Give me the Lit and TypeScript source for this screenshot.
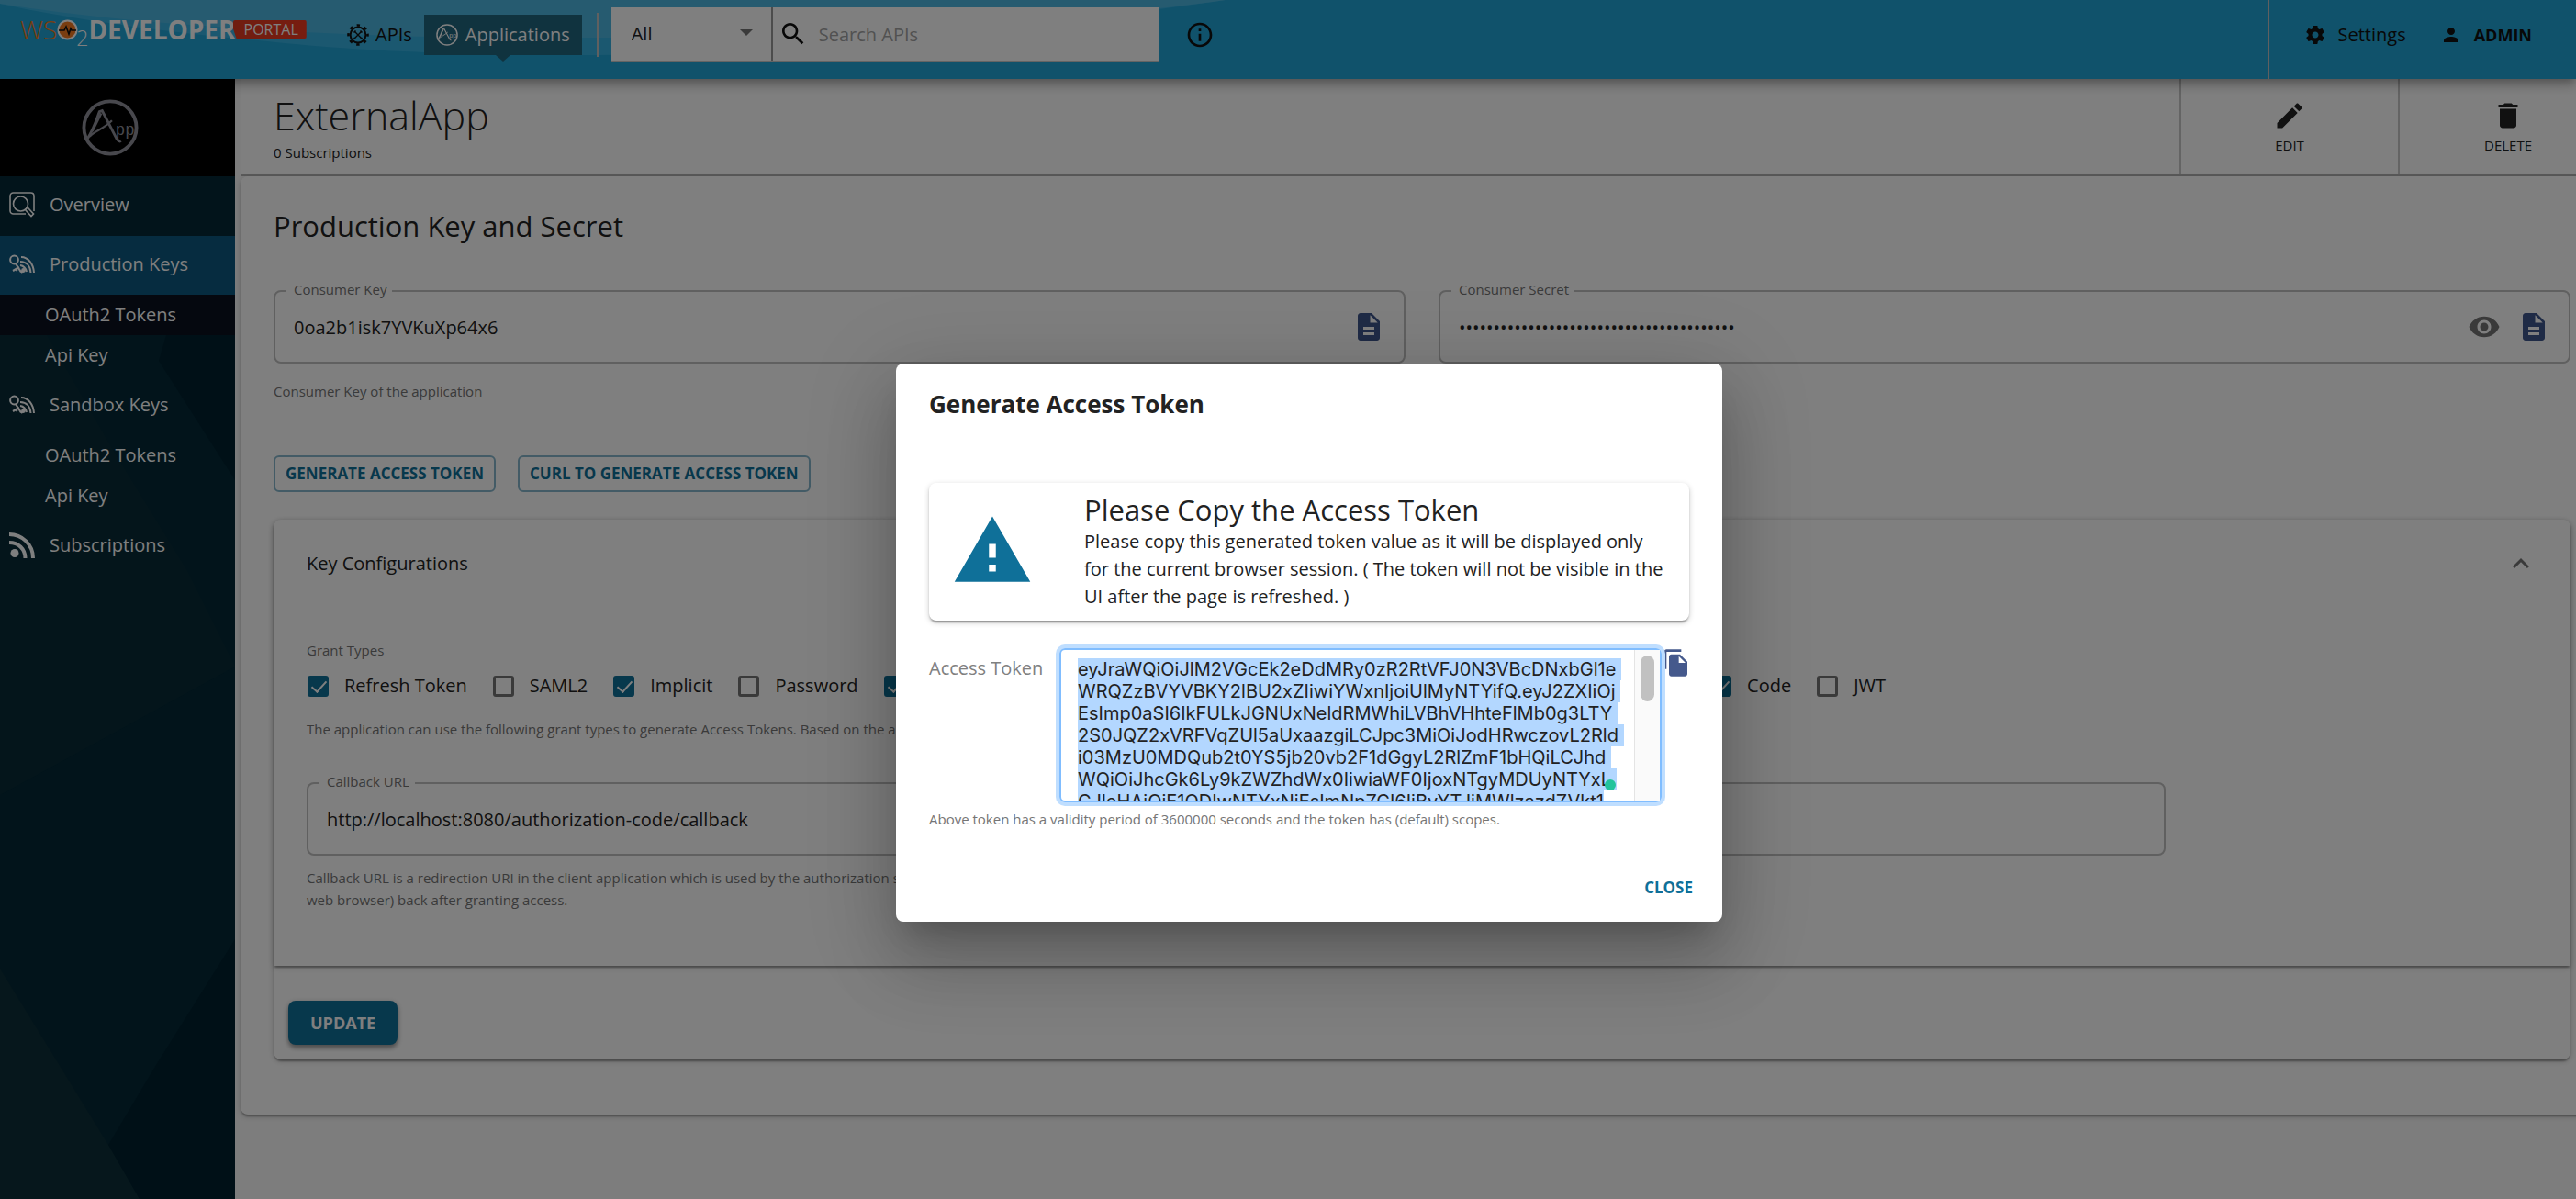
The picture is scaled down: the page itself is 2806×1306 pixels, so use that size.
import { LitElement, html, css } from "lit";
import { customElement, query } from "lit/decorators.js";

const PATHS = {
  search:
    "M15.5 14h-.79l-.28-.27C15.41 12.59 16 11.11 16 9.5 16 5.91 13.09 3 9.5 3S3 5.91 3 9.5 5.91 16 9.5 16c1.61 0 3.09-.59 4.23-1.57l.27.28v.79l5 4.99L20.49 19l-4.99-5zm-6 0C7.01 14 5 11.99 5 9.5S7.01 5 9.5 5 14 7.01 14 9.5 11.99 14 9.5 14z",
  info: "M11 17h2v-6h-2v6zm1-15C6.48 2 2 6.48 2 12s4.48 10 10 10 10-4.48 10-10S17.52 2 12 2zm0 18c-4.41 0-8-3.59-8-8s3.59-8 8-8 8 3.59 8 8-3.59 8-8 8zM11 9h2V7h-2v2z",
  settings:
    "M19.43 12.98c.04-.32.07-.64.07-.98s-.03-.66-.07-.98l2.11-1.65c.19-.15.24-.42.12-.64l-2-3.46c-.12-.22-.39-.3-.61-.22l-2.49 1c-.52-.4-1.08-.73-1.69-.98l-.38-2.65C14.46 2.18 14.25 2 14 2h-4c-.25 0-.46.18-.49.42l-.38 2.65c-.61.25-1.17.59-1.69.98l-2.49-1c-.23-.09-.49 0-.61.22l-2 3.46c-.13.22-.07.49.12.64l2.11 1.65c-.04.32-.07.65-.07.98s.03.66.07.98l-2.11 1.65c-.19.15-.24.42-.12.64l2 3.46c.12.22.39.3.61.22l2.49-1c.52.4 1.08.73 1.69.98l.38 2.65c.03.24.24.42.49.42h4c.25 0 .46-.18.49-.42l.38-2.65c.61-.25 1.17-.59 1.69-.98l2.49 1c.23.09.49 0 .61-.22l2-3.46c.12-.22.07-.49-.12-.64l-2.11-1.65zM12 15.5c-1.93 0-3.5-1.57-3.5-3.5s1.57-3.5 3.5-3.5 3.5 1.57 3.5 3.5-1.57 3.5-3.5 3.5z",
  person:
    "M12 12c2.21 0 4-1.79 4-4s-1.79-4-4-4-4 1.79-4 4 1.79 4 4 4zm0 2c-2.67 0-8 1.34-8 4v2h16v-2c0-2.66-5.33-4-8-4z",
  edit: "M3 17.25V21h3.75L17.81 9.94l-3.75-3.75L3 17.25zM20.71 7.04c.39-.39.39-1.02 0-1.41l-2.34-2.34c-.39-.39-1.02-.39-1.41 0l-1.83 1.83 3.75 3.75 1.83-1.83z",
  trash: "M6 19c0 1.1.9 2 2 2h8c1.1 0 2-.9 2-2V7H6v12zM19 4h-3.5l-1-1h-5l-1 1H5v2h14V4z",
  doc: "M14 2H6c-1.1 0-1.99.9-1.99 2L4 20c0 1.1.89 2 1.99 2H18c1.1 0 2-.9 2-2V8l-6-6zm2 16H8v-2h8v2zm0-4H8v-2h8v2zm-3-5V3.5L18.5 9H13z",
  eye: "M12 4.5C7 4.5 2.73 7.61 1 12c1.73 4.39 6 7.5 11 7.5s9.27-3.11 11-7.5c-1.73-4.39-6-7.5-11-7.5zM12 17c-2.76 0-5-2.24-5-5s2.24-5 5-5 5 2.24 5 5-2.24 5-5 5zm0-8c-1.66 0-3 1.34-3 3s1.34 3 3 3 3-1.34 3-3-1.34-3-3-3z",
  chevronUp: "M12 8l-6 6 1.41 1.41L12 10.83l4.59 4.58L18 14z",
  warning: "M1 21h22L12 2 1 21zm12-3h-2v-2h2v2zm0-4h-2v-4h2v4z",
  copy: "M16 1H4c-1.1 0-2 .9-2 2v14h2V3h12V1zm-1 4l6 6v10c0 1.1-.9 2-1.99 2H7.99C6.89 23 6 22.1 6 21V7c0-1.1.9-2 1.99-2H15zm-1 7h5.5L14 6.5V12z",
};

const icon = (name: keyof typeof PATHS, size: number) => html`
  <svg class="icon" width=${size} height=${size} viewBox="0 0 24 24" aria-hidden="true">
    <path d=${PATHS[name]} />
  </svg>
`;

/* Ringed application emblem, shared by the header tab and the sidebar. */
const appEmblem = (size: number) => html`
  <svg width=${size} height=${size} viewBox="0 0 64 64" fill="none" stroke="currentColor" aria-hidden="true">
    <circle cx="32" cy="32" r="29.5" stroke-width="4" />
    <path d="M5 47C11 38 16 26 20 14l3-1 16 31c2 3 4 4 5 3" stroke-width="3" />
    <path d="M9 42C14 36 24 34 34 24M22 16L12 36" stroke-width="2.4" />
    <text class="emblem-text" x="38" y="40" stroke="none" fill="currentColor">pp</text>
  </svg>
`;

const keysIcon = html`
  <svg width="28" height="24" viewBox="0 0 28 24" fill="none" stroke="currentColor" aria-hidden="true">
    <circle cx="5.5" cy="7" r="4.4" stroke-width="2" />
    <path d="M7 11l6 9.500M4 19l7-4M9 17.500l-2 1M13 21l2-2" stroke-width="2.200" />
    <path d="M12 9c7 0 11 5 11.500 12M13 4c8 0 13.500 8 14 17M12 13c3 .5 6 3 7 7" stroke-width="2" />
    <circle cx="15.500" cy="18.500" r="2.400" fill="currentColor" stroke="none" />
  </svg>
`;

const overviewIcon = html`
  <svg width="28" height="28" viewBox="0 0 28 28" fill="none" stroke="currentColor" stroke-width="1.6" aria-hidden="true">
    <path d="M18 24H4.500C2.500 24 1 22.500 1 20.500V4.500C1 2.500 2.500 1 4.500 1h19C25.500 1 27 2.500 27 4.500V21" />
    <circle cx="12.500" cy="13" r="8" />
    <path d="M17.500 19.500l2.500-2.500 6.500 7-2.500 2.500z" />
  </svg>
`;

const rssIcon = html`
  <svg width="28" height="28" viewBox="0 0 28 28" fill="none" stroke="currentColor" stroke-width="4" aria-hidden="true">
    <circle cx="6" cy="22.500" r="4.500" fill="currentColor" stroke="none" />
    <path d="M0 11c10 0 17.500 7 17.500 17M0 2c14 0 26 11 26 26" />
  </svg>
`;

const apiIcon = html`
  <svg width="24" height="24" viewBox="0 0 24 24" fill="none" stroke="currentColor" aria-hidden="true">
    <circle cx="12" cy="12" r="8.400" stroke-width="2" />
    <circle cx="12" cy="12" r="10.500" stroke-width="2.600" stroke-dasharray="3.400 4.847" stroke-dashoffset="1.700" />
    <path d="M8.500 8.500l7 7M15.500 8.500l-7 7" stroke-width="1.400" />
    <path d="M7.500 9.500l2-2M14.500 7.500l2 2M15 16.500l1.500-1.500M7.500 15l1.500 1.500" stroke-width="1.600" />
  </svg>
`;

const GRANTS_START = [
  { label: "Refresh Token", checked: true },
  { label: "SAML2", checked: false },
  { label: "Implicit", checked: true },
  { label: "Password", checked: false },
  { label: "Client Credentials", checked: true },
];
const GRANTS_END = [
  { label: "Code", checked: true },
  { label: "JWT", checked: false },
];

const TOKEN = [
  "eyJraWQiOiJlM2VGcEk2eDdMRy0zR2RtVFJ0N3VBcDNxbGl1e",
  "WRQZzBVYVBKY2lBU2xZIiwiYWxnIjoiUlMyNTYifQ.eyJ2ZXIiOj",
  "EsImp0aSI6IkFULkJGNUxNeldRMWhiLVBhVHhteFlMb0g3LTY",
  "2S0JQZ2xVRFVqZUl5aUxaazgiLCJpc3MiOiJodHRwczovL2Rld",
  "i03MzU0MDQub2t0YS5jb20vb2F1dGgyL2RlZmF1bHQiLCJhd",
  "WQiOiJhcGk6Ly9kZWZhdWx0IiwiaWF0IjoxNTgyMDUyNTYxL",
  "CJleHAiOjE1ODIwNTYxNjEsImNpZCI6IjBvYTJiMWlzazdZVkt1",
].join("\n");

@customElement("app-root")
export class AppRoot extends LitElement {
  @query(".token-text") private tokenText!: HTMLTextAreaElement;

  static styles = css`
    :host {
      display: block;
      --primary: #0f7099;
      --text: #222;
      --muted: #757575;
      --paper-shadow: 0 2px 6px rgba(0, 0, 0, 0.2), 0 2px 2px rgba(0, 0, 0, 0.14), 0 4px 2px -2px rgba(0, 0, 0, 0.2);
      font: 400 20px/28px "Open Sans", sans-serif;
      color: var(--text);
    }
    * {
      box-sizing: border-box;
    }
    h1, h2, h3, p, ul {
      margin: 0;
      padding: 0;
      font-size: inherit;
      font-weight: 400;
    }
    ul {
      list-style: none;
    }
    a {
      color: inherit;
      text-decoration: none;
    }
    button, input, select, textarea {
      font: inherit;
      color: inherit;
      border: 0;
      background: none;
      padding: 0;
      margin: 0;
      outline: 0;
    }
    svg {
      display: block;
      flex: none;
    }
    .icon {
      fill: currentColor;
    }
    .app {
      position: relative;
      display: flex;
      flex-direction: column;
      min-height: 100vh;
      overflow: hidden;
      background: #fafafa;
    }

    /* Header */
    .header {
      position: relative;
      z-index: 1;
      display: flex;
      align-items: center;
      height: 86px;
      padding-left: 22px;
      background: #20a4d6;
      box-shadow: 0 4px 8px -2px rgba(0, 0, 0, 0.2), 0 8px 10px rgba(0, 0, 0, 0.14), 0 2px 20px rgba(0, 0, 0, 0.12);
      color: #111;
    }
    .waves {
      position: absolute;
      left: 0;
      top: 0;
    }
    .header > :not(.waves) {
      position: relative;
    }
    .brand {
      display: flex;
      align-items: center;
      height: 44px;
      margin-bottom: 22px;
      width: 356px;
      color: #fff;
    }
    .brand-ws {
      font: 300 28px/44px "Open Sans", sans-serif;
      color: #f47b20;
    }
    .brand-two {
      font: 300 23px/28px "Open Sans", sans-serif;
      align-self: flex-end;
      margin: 0 0 -1px -2px;
    }
    .brand-name {
      font: 700 28px/44px "Open Sans", sans-serif;
    }
    .brand-badge {
      margin-left: -3px;
      padding: 0 9px 0 12px;
      border-radius: 2px;
      font: 400 16px/20px "Open Sans", sans-serif;
      background: linear-gradient(90deg, #e03a20, #f03a20);
      clip-path: polygon(0 0, 100% 0, 100% 100%, 4px 100%, 0 40%);
    }
    .tab {
      display: flex;
      align-items: center;
      gap: 7px;
      height: 44px;
      margin-bottom: 10px;
    }
    .tab-active {
      gap: 8px;
      margin-left: 13px;
      padding: 0 13px;
      background: #20667e;
      color: #fff;
    }
    .tab-active::after {
      content: "";
      position: absolute;
      top: 100%;
      left: 50%;
      margin-left: -8px;
      border: solid transparent;
      border-width: 7px 8px 0;
      border-top-color: #20667e;
    }
    .header-rule {
      width: 2px;
      height: 48px;
      margin: 0 14px 10px 16px;
      background: #c0c0c0;
    }
    .finder {
      display: flex;
      align-items: center;
      width: 596px;
      height: 60px;
      margin-bottom: 10px;
      background: #fff;
      border-bottom: 2px solid #c8c8c8;
    }
    .scope {
      position: relative;
      width: 176px;
      height: 58px;
      border-right: 2px solid #999;
    }
    .scope-select {
      width: 100%;
      height: 100%;
      padding-left: 22px;
      appearance: none;
      color: var(--text);
    }
    .scope::after {
      content: "";
      position: absolute;
      right: 20px;
      top: 24px;
      border: solid transparent;
      border-width: 7px 7px 0;
      border-top-color: #757575;
      pointer-events: none;
    }
    .finder-search {
      display: flex;
      flex: 1;
      align-items: center;
      gap: 12px;
      padding-left: 6px;
    }
    .finder-input {
      flex: 1;
      min-width: 0;
      height: 58px;
    }
    .finder-input::placeholder {
      color: #a3a3a3;
      opacity: 1;
    }
    .info-button {
      margin: 0 0 10px 29px;
    }
    .account {
      display: flex;
      align-items: center;
      height: 86px;
      margin-left: auto;
      padding: 0 48px 10px 38px;
      border-left: 2px solid #c0c0c0;
      gap: 37px;
    }
    .account-link {
      display: flex;
      align-items: center;
      gap: 13px;
    }
    .account-name {
      font-weight: 700;
      font-size: 18px;
    }

    /* Body */
    .body {
      display: flex;
      flex: 1;
    }
    .sidebar {
      position: relative;
      flex: none;
      width: 256px;
      background: #042836;
      color: #fff;
      overflow: hidden;
    }
    .facets {
      position: absolute;
      inset: 0;
      width: 100%;
      height: 100%;
    }
    .sidebar-app {
      position: relative;
      display: flex;
      justify-content: center;
      align-items: center;
      height: 106px;
      padding-right: 16px;
      background: #000;
      color: #90909a;
    }
    .menu {
      position: relative;
      display: flex;
      flex-direction: column;
      gap: 1px;
    }
    .menu-item {
      display: flex;
      align-items: center;
      gap: 16px;
      height: 64px;
      padding: 0 0 2px 10px;
    }
    .menu-current {
      background: #0c5880;
    }
    .submenu-item {
      display: flex;
      align-items: center;
      height: 44px;
      padding-left: 49px;
    }
    .submenu-current {
      background: #0a101e;
    }

    .main {
      flex: 1;
      min-width: 0;
      padding-left: 6px;
    }
    .wide {
      margin-right: -44px;
    }
    .titlebar {
      display: flex;
      height: 106px;
      padding-left: 36px;
      background: #fff;
      border-bottom: 2px solid #b4b4b4;
    }
    .titles {
      flex: 1;
      padding-top: 12px;
    }
    .app-name {
      font-weight: 300;
      font-size: 43px;
      line-height: 56px;
    }
    .caption {
      font-size: 15px;
      line-height: 24px;
    }
    .muted {
      color: var(--muted);
    }
    .title-action {
      display: flex;
      flex-direction: column;
      align-items: center;
      gap: 2px;
      width: 238px;
      padding-top: 22px;
      border-left: 2px solid #c8c8c8;
      font-size: 15px;
      line-height: 24px;
    }
    .paper {
      padding: 32px 50px 60px 36px;
      border-radius: 8px;
      background: #fff;
      box-shadow: var(--paper-shadow);
    }
    .heading {
      font-size: 31px;
      line-height: 44px;
    }
    .field-row {
      display: grid;
      grid-template-columns: 1fr 1fr;
      align-items: start;
      gap: 36px;
      margin-top: 37px;
    }
    .field {
      min-width: 0;
      margin: 0;
      padding: 0 20px 11px;
      border: 2px solid #c0c0c0;
      border-radius: 8px;
    }
    .field-legend {
      margin-left: -8px;
      padding: 0 6px 4px 8px;
      font-size: 15px;
      line-height: 20px;
      color: var(--muted);
    }
    .field-line {
      display: flex;
      align-items: center;
      gap: 18px;
      height: 54px;
    }
    .field-input {
      flex: 1;
      min-width: 0;
      height: 54px;
    }
    .field-copy {
      color: #3f568c;
    }
    .field-hint {
      margin-top: 18px;
    }
    .token-actions {
      display: flex;
      gap: 24px;
      margin-top: 58px;
    }
    .outlined {
      height: 40px;
      padding: 0 11px;
      border: 2px solid #87b7cc;
      border-radius: 6px;
      font-weight: 700;
      font-size: 17px;
      color: var(--primary);
    }
    .card {
      margin-top: 30px;
      border-radius: 8px;
      box-shadow: var(--paper-shadow);
    }
    .panel {
      padding: 0 36px 60px;
      border-radius: 8px 8px 0 0;
      box-shadow: var(--paper-shadow);
    }
    .panel-head {
      display: flex;
      align-items: center;
      justify-content: space-between;
      height: 96px;
    }
    .chevron {
      color: #757575;
    }
    .grants {
      margin-top: 34px;
    }
    .grant-row {
      display: flex;
      justify-content: space-between;
      max-width: 1720px;
      height: 54px;
    }
    .grant-group {
      display: flex;
      gap: 27px;
    }
    .grant {
      display: flex;
      align-items: center;
      gap: 17px;
    }
    .grant-box {
      position: relative;
      width: 23px;
      height: 23px;
      margin-left: 1px;
      appearance: none;
      border: 3px solid #757575;
      border-radius: 3px;
    }
    .grant-box:checked {
      border-color: var(--primary);
      background: var(--primary);
    }
    .grant-box:checked::before {
      content: "";
      position: absolute;
      left: 5px;
      top: -1px;
      width: 7px;
      height: 14px;
      border: solid #fff;
      border-width: 0 2px 2px 0;
      transform: rotate(42deg);
    }
    .grant-hint {
      margin-top: 8px;
    }
    .callback {
      width: calc(100% * 10 / 12);
      margin-top: 35px;
    }
    .callback-hint {
      margin-top: 12px;
    }
    .card-actions {
      padding: 38px 16px 16px;
    }
    .contained {
      height: 48px;
      padding: 0 24px;
      border-radius: 8px;
      background: var(--primary);
      color: #fff;
      font-weight: 700;
      font-size: 18px;
      box-shadow: 0 2px 6px rgba(0, 0, 0, 0.3), 0 4px 4px rgba(0, 0, 0, 0.2);
    }

    /* Dialog */
    .backdrop {
      position: absolute;
      z-index: 2;
      inset: 0 -46px -94px 0;
      display: grid;
      place-items: center;
      background: rgba(0, 0, 0, 0.5);
    }
    .dialog {
      width: 900px;
      padding: 26px 36px 14px;
      border-radius: 8px;
      background: #fff;
      box-shadow: 0 22px 30px -14px rgba(0, 0, 0, 0.2), 0 48px 76px 6px rgba(0, 0, 0, 0.14),
        0 18px 92px 16px rgba(0, 0, 0, 0.12);
    }
    .dialog-title {
      font-weight: 700;
      font-size: 26px;
      line-height: 36px;
    }
    .notice {
      display: flex;
      align-items: center;
      gap: 55px;
      margin-top: 68px;
      padding: 9px 20px 11px 24px;
      border-radius: 8px;
      box-shadow: var(--paper-shadow);
    }
    .notice-icon {
      color: var(--primary);
    }
    .notice-title {
      font-size: 31px;
      line-height: 40px;
    }
    .notice-text {
      line-height: 30px;
    }
    .token-row {
      display: flex;
      align-items: flex-start;
      margin-top: 30px;
    }
    .token-label {
      flex: none;
      width: 142px;
      padding-top: 8px;
      color: #808080;
    }
    .token-box {
      position: relative;
      display: flex;
      flex: none;
      width: 656px;
      height: 168px;
      border: 2px solid #80bdff;
      border-radius: 6px;
      box-shadow: 0 0 0 4px #bfdeff;
    }
    .token-text {
      flex: 1;
      min-width: 0;
      padding: 9px 0 0 18px;
      resize: none;
      overflow: hidden;
      white-space: pre;
      font: 400 20px/24px Inter, "Liberation Sans", sans-serif;
      color: #222;
    }
    .token-text::selection {
      background: #b3d7ff;
      color: #222;
    }
    .token-scroll {
      width: 28px;
      padding: 6px 6px 0;
      border-left: 1px solid #e4e4e4;
      background: #fafafa;
    }
    .token-thumb {
      height: 50px;
      border-radius: 8px;
      background: #c1c1c1;
    }
    .token-dot {
      position: absolute;
      right: 48px;
      bottom: 11px;
      width: 12px;
      height: 12px;
      border-radius: 50%;
      background: #22c49c;
    }
    .token-copy {
      color: #45598c;
    }
    .token-hint {
      margin-top: 6px;
    }
    .dialog-actions {
      display: flex;
      justify-content: flex-end;
      margin-top: 40px;
      margin-right: -12px;
    }
    .text-button {
      height: 46px;
      padding: 0 8px;
      font-weight: 700;
      font-size: 17px;
      color: var(--primary);
    }
    .emblem-text {
      font: 400 18px/18px "Liberation Mono", monospace;
    }
  `;

  firstUpdated() {
    this.tokenText.focus({ preventScroll: true });
    this.tokenText.select();
    this.tokenText.scrollTop = 0;
  }

  private grant(g: { label: string; checked: boolean }) {
    return html`<label class="grant">
      <input class="grant-box" type="checkbox" .checked=${g.checked} />${g.label}
    </label>`;
  }

  private header() {
    return html`<header class="header">
      <svg class="waves" width="1340" height="86" viewBox="0 0 1340 86" aria-hidden="true">
        <path fill="#36b0e0" d="M0 0V4C90 24 210 38 300 46 400 56 500 60 650 60 900 60 1150 26 1335 0z" />
        <path fill="#4cb6e0" d="M0 0V4C90 18 160 24 250 30 420 42 560 42 640 41 880 40 1150 26 1335 0z" />
      </svg>
      <a class="brand" href="#">
        <span class="brand-ws">WS</span>
        <svg width="23" height="23" viewBox="0 0 23 23" aria-hidden="true">
          <circle cx="11.500" cy="11.500" r="10" fill="#f47b20" stroke="#fff" stroke-width="2" />
          <path d="M2 12h6l2-4 3 8 2-6 1 2h5" fill="none" stroke="#111" stroke-width="1.600" />
        </svg>
        <span class="brand-two">2</span>
        <span class="brand-name">DEVELOPER</span>
        <span class="brand-badge">PORTAL</span>
      </a>
      <a class="tab" href="#">${apiIcon}APIs</a>
      <a class="tab tab-active" href="#">${appEmblem(24)}Applications</a>
      <span class="header-rule"></span>
      <div class="finder">
        <div class="scope">
          <select class="scope-select" aria-label="Search scope">
            <option>All</option>
          </select>
        </div>
        <label class="finder-search">
          ${icon("search", 32)}
          <input class="finder-input" type="search" placeholder="Search APIs" aria-label="Search APIs" />
        </label>
      </div>
      <button class="info-button" aria-label="Search help">${icon("info", 32)}</button>
      <div class="account">
        <a class="account-link" href="#">${icon("settings", 24)}Settings</a>
        <a class="account-link account-name" href="#">${icon("person", 24)}ADMIN</a>
      </div>
    </header>`;
  }

  private sidebar() {
    return html`<nav class="sidebar">
      <svg class="facets" viewBox="0 0 256 1220" preserveAspectRatio="none" aria-hidden="true">
        <path fill="#00202e" d="M181 279L173 307 256 437V170z" />
        <path fill="#0c2e38" d="M0 279H51L123 404 203 534 256 640 0 780z" opacity=".5" />
        <path fill="#0c2e38" d="M0 969L118 1161 152 1220H0z" />
        <path fill="#00202e" d="M256 937L170 1074 118 1161 152 1220H256z" />
      </svg>
      <div class="sidebar-app">${appEmblem(62)}</div>
      <ul class="menu">
        <li><a class="menu-item" href="#">${overviewIcon}Overview</a></li>
        <li>
          <a class="menu-item menu-current" href="#">${keysIcon}Production Keys</a>
          <a class="submenu-item submenu-current" href="#">OAuth2 Tokens</a>
          <a class="submenu-item" href="#">Api Key</a>
        </li>
        <li>
          <a class="menu-item" href="#">${keysIcon}Sandbox Keys</a>
          <a class="submenu-item" href="#">OAuth2 Tokens</a>
          <a class="submenu-item" href="#">Api Key</a>
        </li>
        <li><a class="menu-item" href="#">${rssIcon}Subscriptions</a></li>
      </ul>
    </nav>`;
  }

  private configurations() {
    return html`<section class="card">
      <div class="panel">
        <div class="panel-head">
          <h3>Key Configurations</h3>
          <button class="chevron" aria-label="Collapse">${icon("chevronUp", 36)}</button>
        </div>
        <div class="grants">
          <p class="caption muted">Grant Types</p>
          <div class="grant-row">
            <div class="grant-group">${GRANTS_START.map((g) => this.grant(g))}</div>
            <div class="grant-group">${GRANTS_END.map((g) => this.grant(g))}</div>
          </div>
          <p class="caption muted grant-hint">
            The application can use the following grant types to generate Access Tokens. Based on the application
            requirement, you can enable or disable grant types for this application.
          </p>
        </div>
        <fieldset class="field callback">
          <legend class="field-legend"><label for="callback">Callback URL</label></legend>
          <div class="field-line">
            <input class="field-input" id="callback" value="http://localhost:8080/authorization-code/callback" />
          </div>
        </fieldset>
        <p class="caption muted callback-hint">
          Callback URL is a redirection URI in the client application which is used by the authorization server to send
          the client's user-agent (usually<br />web browser) back after granting access.
        </p>
      </div>
      <div class="card-actions"><button class="contained">UPDATE</button></div>
    </section>`;
  }

  private dialog() {
    return html`<div class="backdrop">
      <div class="dialog" role="dialog" aria-modal="true" aria-labelledby="dialog-title">
        <h2 class="dialog-title" id="dialog-title">Generate Access Token</h2>
        <div class="notice">
          <span class="notice-icon">${icon("warning", 90)}</span>
          <div>
            <h3 class="notice-title">Please Copy the Access Token</h3>
            <p class="notice-text">
              Please copy this generated token value as it will be displayed only for the current browser session. ( The
              token will not be visible in the UI after the page is refreshed. )
            </p>
          </div>
        </div>
        <div class="token-row">
          <label class="token-label" for="token">Access Token</label>
          <div class="token-box">
            <textarea class="token-text" id="token" readonly spellcheck="false" .value=${TOKEN}></textarea>
            <div class="token-scroll"><div class="token-thumb"></div></div>
            <span class="token-dot"></span>
          </div>
          <button class="token-copy" aria-label="Copy token">${icon("copy", 32)}</button>
        </div>
        <p class="caption muted token-hint">
          Above token has a validity period of 3600000 seconds and the token has (default) scopes.
        </p>
        <div class="dialog-actions"><button class="text-button">CLOSE</button></div>
      </div>
    </div>`;
  }

  render() {
    return html`<div class="app">
      ${this.header()}
      <div class="body">
        ${this.sidebar()}
        <main class="main">
          <div class="titlebar wide">
            <div class="titles">
              <h1 class="app-name">ExternalApp</h1>
              <p class="caption">0 Subscriptions</p>
            </div>
            <button class="title-action">${icon("edit", 36)}EDIT</button>
            <button class="title-action">${icon("trash", 36)}DELETE</button>
          </div>
          <div class="paper wide">
            <h2 class="heading">Production Key and Secret</h2>
            <div class="field-row">
              <div>
                <fieldset class="field">
                  <legend class="field-legend"><label for="key">Consumer Key</label></legend>
                  <div class="field-line">
                    <input class="field-input" id="key" readonly value="0oa2b1isk7YVKuXp64x6" />
                    <button class="field-copy" aria-label="Copy consumer key">${icon("doc", 36)}</button>
                  </div>
                </fieldset>
                <p class="caption muted field-hint">Consumer Key of the application</p>
              </div>
              <fieldset class="field">
                <legend class="field-legend"><label for="secret">Consumer Secret</label></legend>
                <div class="field-line">
                  <input class="field-input" id="secret" type="password" readonly value=${"x".repeat(40)} />
                  <button class="muted" aria-label="Show secret">${icon("eye", 36)}</button>
                  <button class="field-copy" aria-label="Copy consumer secret">${icon("doc", 36)}</button>
                </div>
              </fieldset>
            </div>
            <div class="token-actions">
              <button class="outlined">GENERATE ACCESS TOKEN</button>
              <button class="outlined">CURL TO GENERATE ACCESS TOKEN</button>
            </div>
            ${this.configurations()}
          </div>
        </main>
      </div>
      ${this.dialog()}
    </div>`;
  }
}
